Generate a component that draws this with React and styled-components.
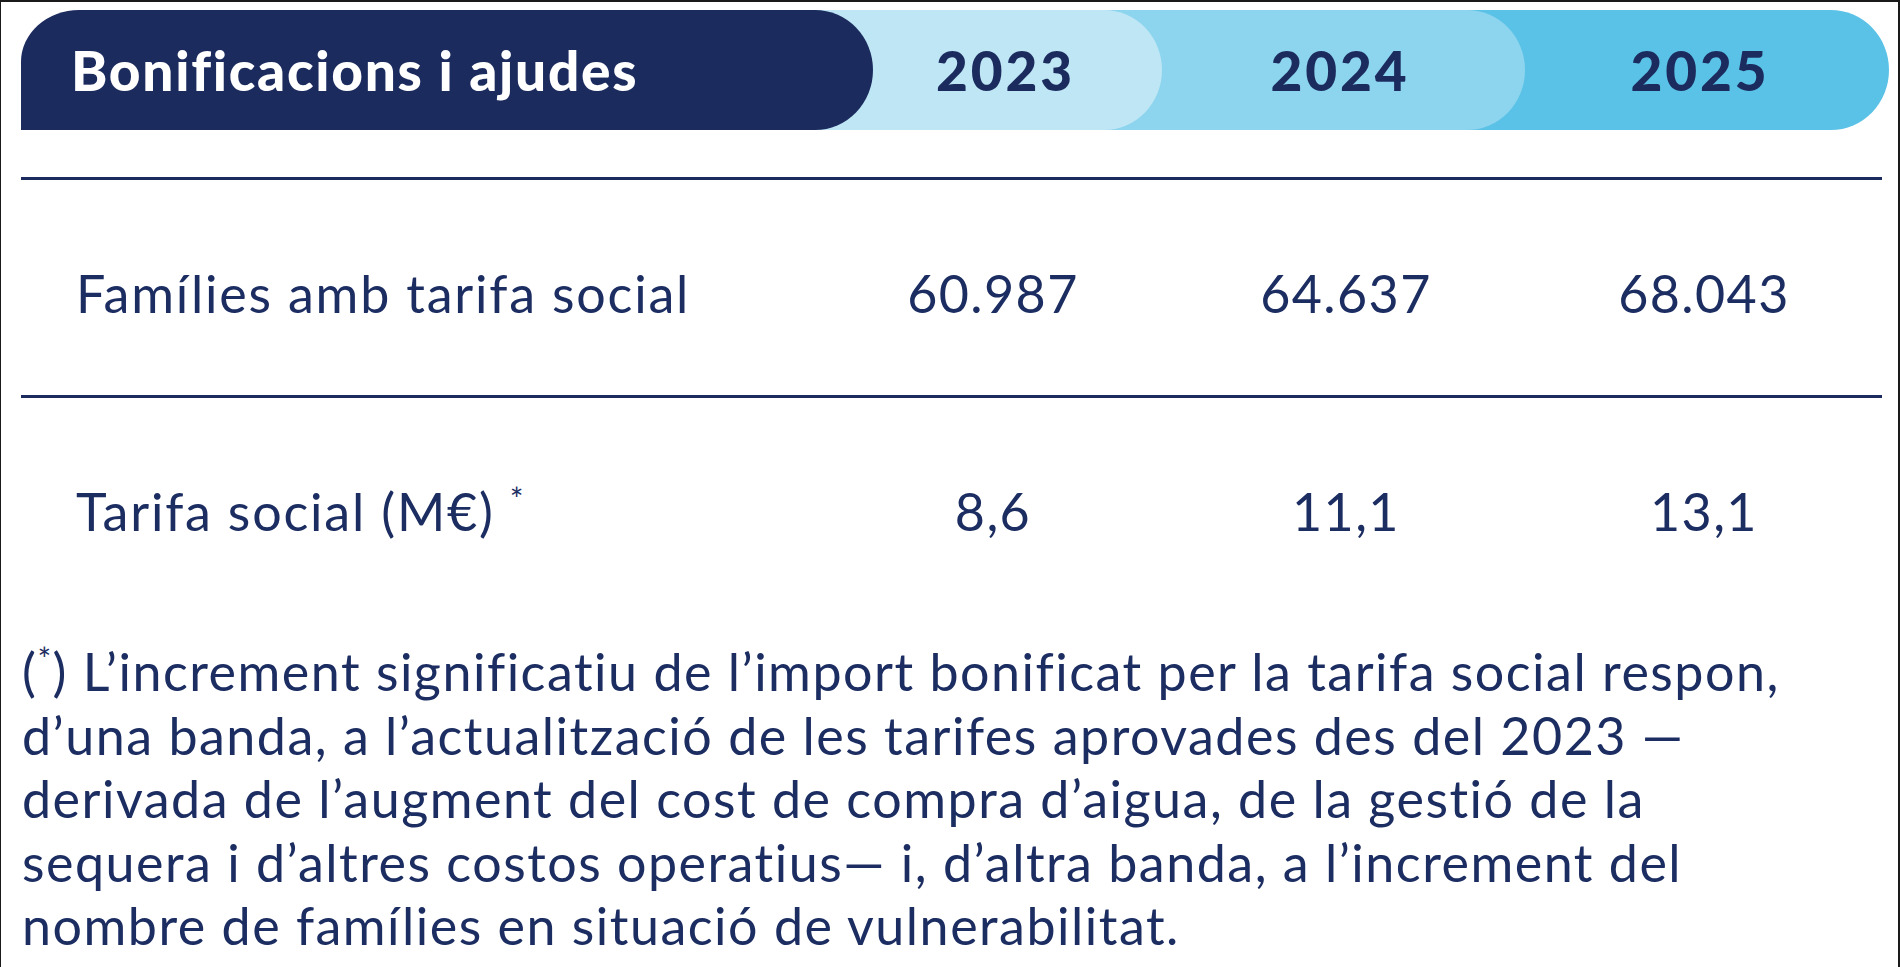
import React from "react";
import styled, { createGlobalStyle } from "styled-components";

const NAVY = "#1b2b5e";
const INK = "#1c2d62";

const Global = createGlobalStyle`
  html, body { margin: 0; padding: 0; background: #ffffff; }
  body { font-family: Lato, "Open Sans", "Liberation Sans", sans-serif; }
  * { box-sizing: border-box; }
`;

const Frame = styled.div`
  width: 1900px;
  height: 967px;
  overflow: hidden;
  background: #ffffff;
  border-top: 2px solid #1a1a1a;
  border-left: 1px solid #1a1a1a;
  border-right: 2px solid #1a1a1a;
  padding: 8px 0 0 20px;
`;

const Header = styled.div`
  display: flex;
  height: 120px;
  align-items: stretch;
`;

const TitleCell = styled.div`
  position: relative;
  z-index: 4;
  width: 852px;
  flex: none;
  display: flex;
  align-items: center;
  padding-left: 50px;
  background: ${NAVY};
  color: #ffffff;
  border-radius: 58px 58px 58px 0 / 52px 60px 60px 0;
  font-family: Lato, "Liberation Sans", sans-serif;
  font-weight: 900;
  font-size: 55px;
  letter-spacing: 1.7px;
`;

const YearCell = styled.div`
  position: relative;
  z-index: ${(p) => p.$layer};
  width: ${(p) => p.$width}px;
  flex: none;
  margin-left: -60px;
  padding-left: 60px;
  padding-right: ${(p) => p.$padRight}px;
  display: flex;
  align-items: center;
  justify-content: center;
  background: ${(p) => p.$bg};
  color: ${NAVY};
  border-radius: 0 58px 58px 0 / 0 60px 60px 0;
  font-family: Lato, "Liberation Sans", sans-serif;
  font-weight: 900;
  font-size: 55px;
  letter-spacing: 2.8px;
`;

const Table = styled.div`
  width: 1861px;
  margin-top: 47px;
`;

const Row = styled.div`
  display: grid;
  grid-template-columns: 799px 346px 360px 356px;
  border-top: 3px solid ${NAVY};
  padding: 82px 0 ${(p) => p.$padBottom}px;
  color: ${INK};
  font-weight: 400;
  font-size: 52px;
  line-height: 62px;
`;

const Label = styled.div`
  padding-left: 55px;
  white-space: nowrap;
  letter-spacing: 1.8px;
`;

const Value = styled.div`
  text-align: center;
  white-space: nowrap;
  letter-spacing: 1.4px;
`;

const Sup = styled.span`
  font-size: 0.62em;
  vertical-align: 0.62em;
  line-height: 0;
`;

const Note = styled.p`
  margin: 26px 0 0 1px;
  color: ${INK};
  font-weight: 400;
  font-size: 52px;
  line-height: 63.5px;
  letter-spacing: 1.5px;
`;

const NoteLine = styled.span`
  display: block;
  white-space: nowrap;
`;

const years = [
  { label: "2023", bg: "#bee6f4", width: 349, padRight: 24, layer: 3 },
  { label: "2024", bg: "#8dd4ee", width: 423, padRight: 7, layer: 2 },
  { label: "2025", bg: "#5bc2e7", width: 424, padRight: 14, layer: 1 },
];

const rows = [
  { label: "Famílies amb tarifa social", values: ["60.987", "64.637", "68.043"], note: false, pad: 71 },
  { label: "Tarifa social (M€)", values: ["8,6", "11,1", "13,1"], note: true, pad: 72 },
];

const noteLines = [
  "L’increment significatiu de l’import bonificat per la tarifa social respon,",
  "d’una banda, a l’actualització de les tarifes aprovades des del 2023 —",
  "derivada de l’augment del cost de compra d’aigua, de la gestió de la",
  "sequera i d’altres costos operatius— i, d’altra banda, a l’increment del",
  "nombre de famílies en situació de vulnerabilitat.",
];

export default function App() {
  return (
    <>
      <Global />
      <Frame>
        <Header>
          <TitleCell>Bonificacions i ajudes</TitleCell>
          {years.map((y) => (
            <YearCell key={y.label} $bg={y.bg} $width={y.width} $padRight={y.padRight} $layer={y.layer}>
              {y.label}
            </YearCell>
          ))}
        </Header>
        <Table>
          {rows.map((r) => (
            <Row key={r.label} $padBottom={r.pad}>
              <Label>
                {r.label}
                {r.note && (
                  <>
                    {" "}
                    <Sup>*</Sup>
                  </>
                )}
              </Label>
              {r.values.map((v, i) => (
                <Value key={i}>{v}</Value>
              ))}
            </Row>
          ))}
        </Table>
        <Note>
          {noteLines.map((line, i) => (
            <NoteLine key={i}>
              {i === 0 && (
                <>
                  (<Sup>*</Sup>){" "}
                </>
              )}
              {line}
            </NoteLine>
          ))}
        </Note>
      </Frame>
    </>
  );
}
